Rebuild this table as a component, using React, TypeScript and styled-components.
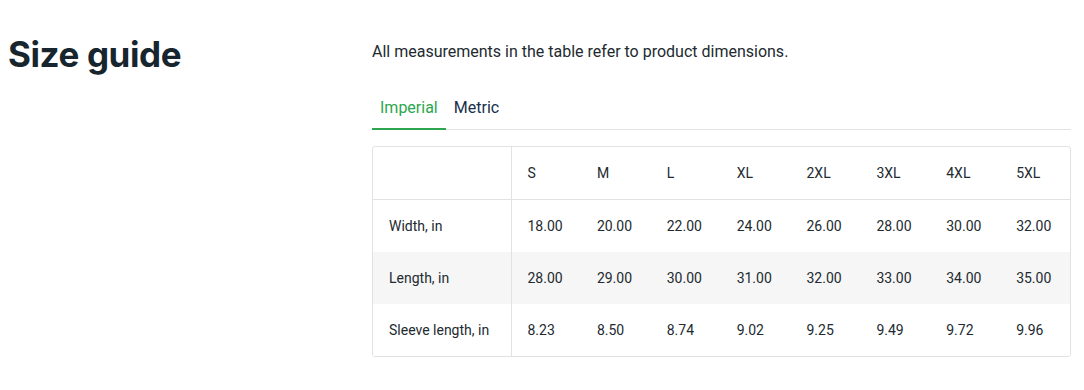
import React, {useState} from 'react';
import styled, {createGlobalStyle} from "styled-components";

const GlobalStyle = createGlobalStyle`
  html, body {
    margin: 0;
    padding: 0;
    background: #ffffff;
  }
`

const Page = styled.div`
  display: grid;
  grid-template-columns: 364px 699px;
  padding: 33px 0 0 8px;
  font-family: Roboto, "Liberation Sans", sans-serif;
  color: #222a30;
`

const Title = styled.h1`
  margin: 0;
  font-family: Inter, "Liberation Sans", sans-serif;
  font-size: 35px;
  line-height: 42px;
  font-weight: 700;
  letter-spacing: -0.4px;
  color: #17262e;
`

const Content = styled.div`
  padding-top: 7px;
`

const Description = styled.p`
  margin: 0;
  font-size: 16px;
  line-height: 24px;
  color: #222a30;
`

const Tabs = styled.div`
  display: flex;
  margin-top: 24px;
  border-bottom: 1px solid #e4e4e4;
`

const Tab = styled.button<{ $active?: boolean }>`
  margin: 0 0 -1px;
  padding: 8px 8px 8px;
  border: none;
  border-bottom: 2px solid ${p => p.$active ? '#2ea64f' : 'transparent'};
  background: none;
  font-family: inherit;
  font-size: 16px;
  line-height: 24px;
  color: ${p => p.$active ? '#2ea64f' : '#17304a'};
  cursor: pointer;
`

const TableBox = styled.div`
  margin-top: 16px;
  border: 1px solid #e2e2e2;
  border-radius: 3px;
  overflow: hidden;
`

const Table = styled.table`
  width: 100%;
  border-collapse: collapse;
  table-layout: fixed;
  font-size: 14px;
  color: #222a30;
`

const HeadCell = styled.th`
  box-sizing: border-box;
  height: 52px;
  padding: 0 16px;
  text-align: left;
  font-weight: 400;
  border-bottom: 1px solid #e2e2e2;

  &:first-child {
    width: 138px;
    border-right: 1px solid #e2e2e2;
  }
`

const Row = styled.tr<{ $shaded?: boolean }>`
  background: ${p => p.$shaded ? '#f6f6f6' : '#ffffff'};
`

const Cell = styled.td`
  height: 52px;
  padding: 0 16px;
  white-space: nowrap;

  &:first-child {
    border-right: 1px solid #e2e2e2;
  }
`

const sizes = ['S', 'M', 'L', 'XL', '2XL', '3XL', '4XL', '5XL']

const tables: { [unit: string]: { label: string, values: string[] }[] } = {
    Imperial: [
        {label: 'Width, in', values: ['18.00', '20.00', '22.00', '24.00', '26.00', '28.00', '30.00', '32.00']},
        {label: 'Length, in', values: ['28.00', '29.00', '30.00', '31.00', '32.00', '33.00', '34.00', '35.00']},
        {label: 'Sleeve length, in', values: ['8.23', '8.50', '8.74', '9.02', '9.25', '9.49', '9.72', '9.96']},
    ],
    Metric: [
        {label: 'Width, cm', values: ['45.7', '50.8', '55.9', '61.0', '66.0', '71.1', '76.2', '81.3']},
        {label: 'Length, cm', values: ['71.1', '73.7', '76.2', '78.7', '81.3', '83.8', '86.4', '88.9']},
        {label: 'Sleeve length, cm', values: ['20.9', '21.6', '22.2', '22.9', '23.5', '24.1', '24.7', '25.3']},
    ],
}

function App() {
    const [unit, setUnit] = useState<string>('Imperial')
    const rows = tables[unit]
    return (
        <>
            <GlobalStyle/>
            <Page>
                <Title>Size guide</Title>
                <Content>
                    <Description>All measurements in the table refer to product dimensions.</Description>
                    <Tabs>
                        {Object.keys(tables).map(name =>
                            <Tab key={name} $active={name === unit} onClick={() => setUnit(name)}>{name}</Tab>
                        )}
                    </Tabs>
                    <TableBox>
                        <Table>
                            <thead>
                            <tr>
                                <HeadCell/>
                                {sizes.map(s => <HeadCell key={s}>{s}</HeadCell>)}
                            </tr>
                            </thead>
                            <tbody>
                            {rows.map((row, i) =>
                                <Row key={row.label} $shaded={i === 1}>
                                    <Cell>{row.label}</Cell>
                                    {row.values.map((v, j) => <Cell key={j}>{v}</Cell>)}
                                </Row>
                            )}
                            </tbody>
                        </Table>
                    </TableBox>
                </Content>
            </Page>
        </>
    );
}

export default App;
